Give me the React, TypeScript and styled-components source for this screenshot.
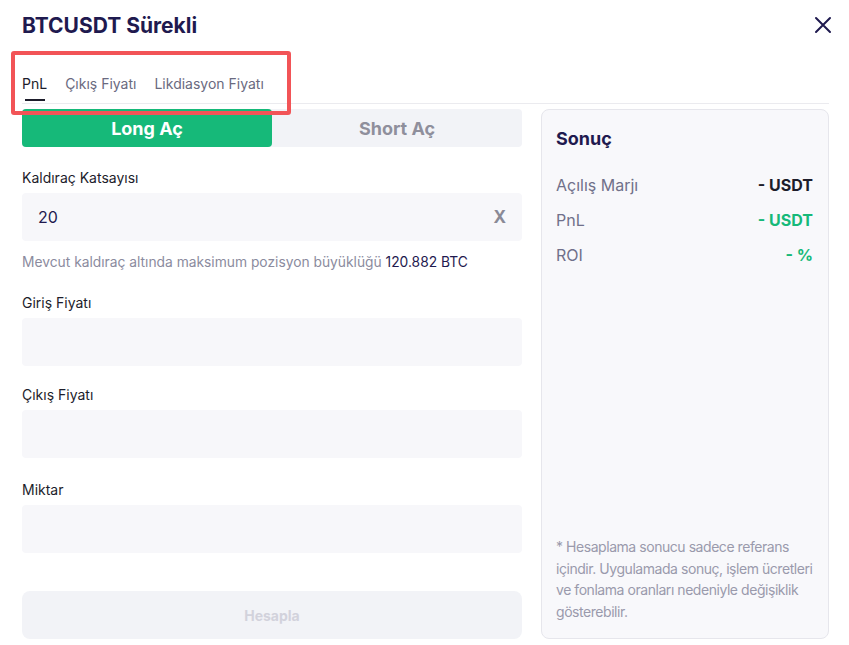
import styled, { createGlobalStyle } from "styled-components"

const GlobalStyle = createGlobalStyle`
  * { box-sizing: border-box; }
  body {
    margin: 0;
    background: #fff;
    font-family: Inter, "Noto Sans", sans-serif;
  }
`

const StyledModal = styled.div`
  position: relative;
  width: 849px;
  height: 645px;
  padding: 10px 20px 0 22px;
  background: #fff;
`
const StyledHeader = styled.header`
  display: flex;
  justify-content: space-between;
  align-items: center;
  height: 30px;

  h1 {
    margin: 0;
    font-size: 21px;
    font-weight: 700;
    color: #1f1a4f;
  }
`
const StyledClose = styled.button`
  border: none;
  background: none;
  padding: 0;
  margin-right: -4px;
  display: flex;
  cursor: pointer;
`
const StyledTabs = styled.nav`
  display: flex;
  gap: 18px;
  margin-top: 34px;
  border-bottom: 1px solid #ebebef;
`
const StyledTab = styled.span<{ $active?: boolean }>`
  position: relative;
  font-size: 14px;
  line-height: 20px;
  padding-bottom: 9px;
  color: ${p => (p.$active ? "#1d1d2b" : "#6a6a80")};

  &::after {
    content: "";
    display: ${p => (p.$active ? "block" : "none")};
    position: absolute;
    left: 3px;
    width: 20px;
    bottom: 2px;
    height: 2px;
    background: #1d1d2b;
  }
`
const StyledHighlight = styled.div`
  position: absolute;
  left: 11px;
  top: 51px;
  width: 280px;
  height: 64px;
  border: 4px solid #f25457;
  border-radius: 3px;
  pointer-events: none;
`
const StyledBody = styled.div`
  display: flex;
  gap: 19px;
  margin-top: 5px;
`
const StyledForm = styled.section`
  width: 500px;
  display: flex;
  flex-direction: column;
`
const StyledToggle = styled.div`
  display: flex;
  height: 38px;
  background: #f2f3f7;
  border-radius: 4px;
`
const StyledSide = styled.button<{ $active?: boolean }>`
  flex: 1;
  border: none;
  border-radius: 4px;
  font-family: inherit;
  font-size: 18px;
  font-weight: 700;
  background: ${p => (p.$active ? "#16b979" : "transparent")};
  color: ${p => (p.$active ? "#fff" : "#8f8f9c")};
`
const StyledLabel = styled.label`
  display: block;
  font-size: 14px;
  line-height: 20px;
  color: #1d1d2b;
  margin-bottom: 5px;
`
const StyledField = styled.div<{ $gap: number }>`
  margin-top: ${p => p.$gap}px;
`
const StyledInput = styled.div`
  height: 48px;
  background: #f7f7fa;
  border-radius: 4px;
  display: flex;
  align-items: center;
  justify-content: space-between;
  padding: 0 16px 0 16px;
  font-size: 16px;
  color: #1f1a4f;

  b {
    font-size: 17px;
    color: #8a8a96;
    font-weight: 700;
  }
`
const StyledHint = styled.p`
  margin: 12px 0 0;
  font-size: 13.8px;
  line-height: 18px;
  color: #8b8b9e;

  span {
    color: #1f1a4f;
  }
`
const StyledSubmit = styled.button`
  margin-top: 38px;
  height: 48px;
  border: none;
  border-radius: 8px;
  background: #f2f3f7;
  color: #d2d2dc;
  font-family: inherit;
  font-size: 14px;
  font-weight: 700;
`
const StyledResult = styled.aside`
  width: 288px;
  height: 530px;
  border: 1px solid #e6e6ec;
  border-radius: 8px;
  background: #f8f8fb;
  padding: 16px 15px 16px 14px;
  display: flex;
  flex-direction: column;

  h2 {
    margin: 0 0 21px;
    font-size: 18px;
    line-height: 26px;
    font-weight: 700;
    color: #1f1a4f;
  }
`
const StyledRow = styled.div`
  display: flex;
  justify-content: space-between;
  font-size: 16px;
  line-height: 24px;
  margin-bottom: 11px;
  color: #70708a;
`
const StyledValue = styled.span<{ $green?: boolean }>`
  font-weight: 700;
  color: ${p => (p.$green ? "#16b979" : "#1d1d2b")};
`
const StyledNote = styled.p`
  margin: auto -10px 0 0;
  font-size: 14px;
  line-height: 21.5px;
  letter-spacing: -0.45px;
  color: #9a9aac;
`

const fields = [
  { label: "Giriş Fiyatı", gap: 22 },
  { label: "Çıkış Fiyatı", gap: 19 },
  { label: "Miktar", gap: 22 },
]

export default function App() {
  return (
    <>
      <GlobalStyle />
      <StyledModal>
        <StyledHeader>
          <h1>BTCUSDT Sürekli</h1>
          <StyledClose aria-label="Kapat">
            <svg width="20" height="20" viewBox="0 0 20 20" fill="none" stroke="#1f1a4f" strokeWidth="2" strokeLinecap="round">
              <path d="M3 3l14 14M17 3L3 17" />
            </svg>
          </StyledClose>
        </StyledHeader>

        <StyledTabs>
          <StyledTab $active>PnL</StyledTab>
          <StyledTab>Çıkış Fiyatı</StyledTab>
          <StyledTab>Likdiasyon Fiyatı</StyledTab>
        </StyledTabs>

        <StyledBody>
          <StyledForm>
            <StyledToggle>
              <StyledSide $active>Long Aç</StyledSide>
              <StyledSide>Short Aç</StyledSide>
            </StyledToggle>

            <StyledField $gap={21}>
              <StyledLabel>Kaldıraç Katsayısı</StyledLabel>
              <StyledInput>
                20 <b>X</b>
              </StyledInput>
            </StyledField>
            <StyledHint>
              Mevcut kaldıraç altında maksimum pozisyon büyüklüğü <span>120.882 BTC</span>
            </StyledHint>

            {fields.map(f => (
              <StyledField $gap={f.gap} key={f.label}>
                <StyledLabel>{f.label}</StyledLabel>
                <StyledInput />
              </StyledField>
            ))}

            <StyledSubmit>Hesapla</StyledSubmit>
          </StyledForm>

          <StyledResult>
            <h2>Sonuç</h2>
            <StyledRow>
              Açılış Marjı <StyledValue>- USDT</StyledValue>
            </StyledRow>
            <StyledRow>
              PnL <StyledValue $green>- USDT</StyledValue>
            </StyledRow>
            <StyledRow>
              ROI <StyledValue $green>- %</StyledValue>
            </StyledRow>
            <StyledNote>
              * Hesaplama sonucu sadece referans içindir. Uygulamada sonuç, işlem ücretleri ve fonlama oranları nedeniyle değişiklik gösterebilir.
            </StyledNote>
          </StyledResult>
        </StyledBody>

        <StyledHighlight />
      </StyledModal>
    </>
  )
}
